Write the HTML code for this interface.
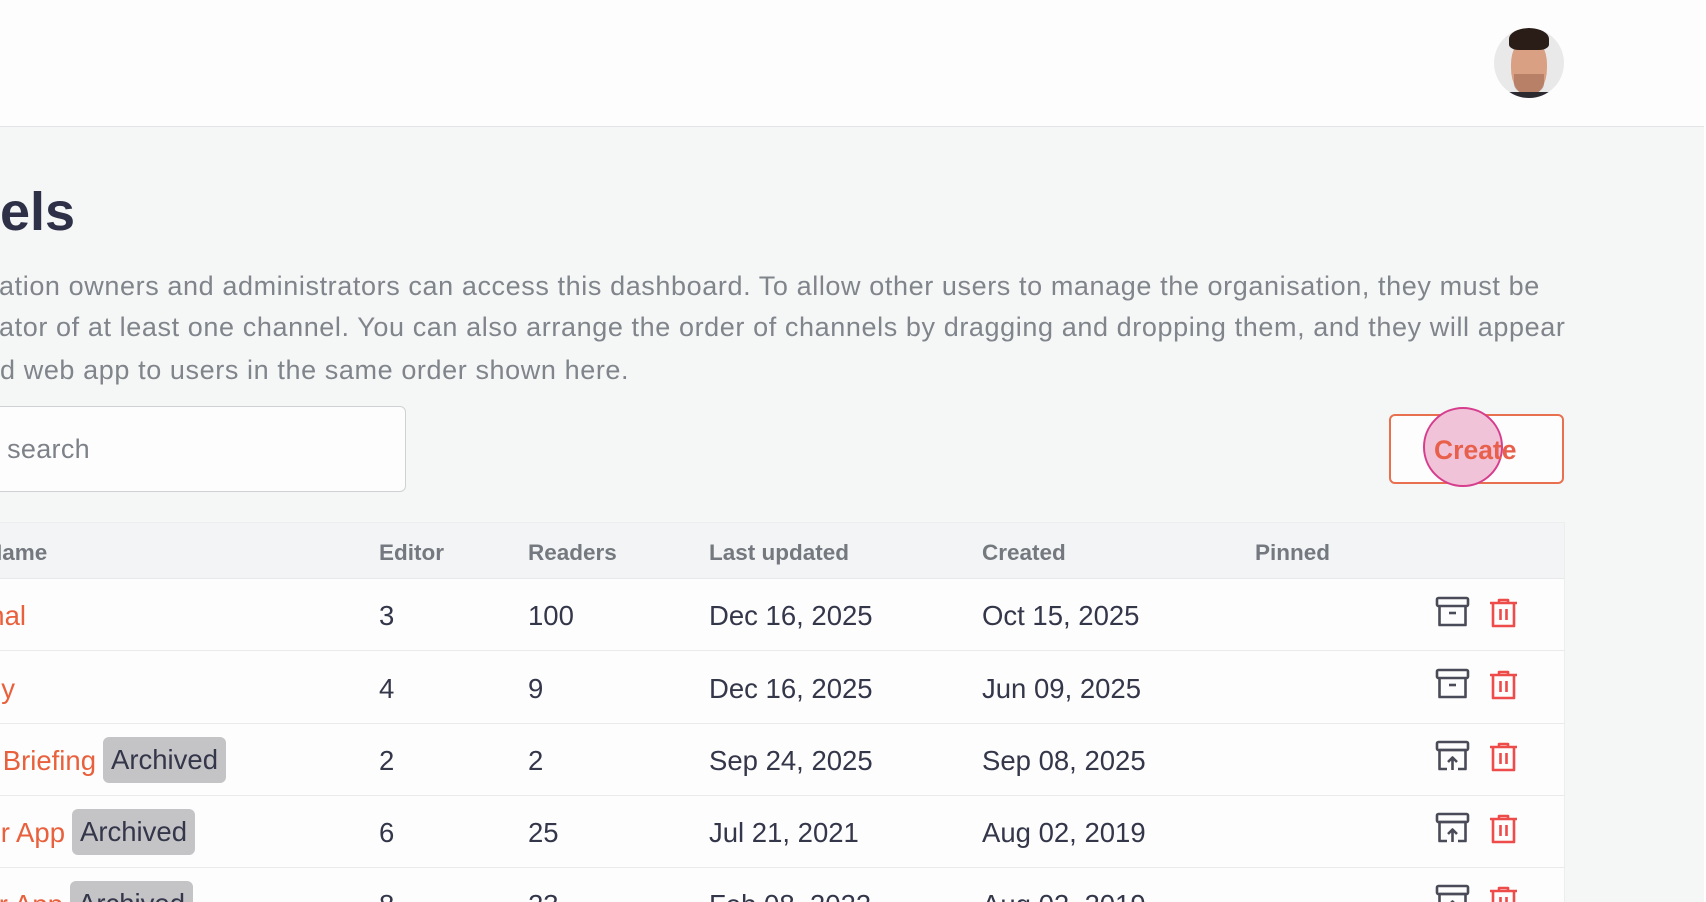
<!DOCTYPE html>
<html><head><meta charset="utf-8"><style>
*{margin:0;padding:0;box-sizing:border-box}
html,body{overflow:hidden}
body{width:1706px;height:902px;background:#f5f6f6;font-family:"Liberation Sans",sans-serif;position:relative}
.wrap{position:absolute;left:0;top:0;width:1706px;height:902px;overflow:hidden}
.hdr{position:absolute;left:0;top:0;width:1704px;height:127px;background:#fdfdfd;border-bottom:1px solid #e2e4e6}
.rline{position:absolute;left:1704px;top:0;width:2px;height:902px;background:#fff}
.ab{position:absolute;white-space:nowrap}
.p{font-size:27px;color:#80848b;letter-spacing:0.6px}
.tbl{position:absolute;left:0;top:522px;width:1565px;height:380px;background:#fdfdfd;border-right:1px solid #ebedef;overflow:hidden}
.th{position:absolute;left:0;top:0;width:1565px;height:57px;background:#f3f4f5;border-bottom:1px solid #e6e8ea;border-top:1px solid #eceef0}
.h{position:absolute;top:17px;font-size:22.5px;color:#74787f;font-weight:bold}
.row{position:absolute;left:0;width:1565px;height:72px;border-bottom:1px solid #e8eaec}
.c{position:absolute;top:21px;font-size:27.5px;color:#34364a;white-space:nowrap}
.n{position:absolute;top:21px;font-size:27.5px;color:#e8603c;white-space:nowrap}
.badge{position:absolute;top:13px;height:46px;line-height:46px;padding:0 8px;background:#c4c4c7;border-radius:6px;font-size:27.5px;color:#34364a}
</style></head><body><div class="wrap">
<div class="hdr"></div>
<div class="rline"></div>
<div class="ab" style="left:1494px;top:28px;width:70px;height:70px;border-radius:50%;background:#e9e9ea;overflow:hidden">
 <div style="position:absolute;left:17px;top:10px;width:36px;height:58px;border-radius:45% 45% 48% 48%;background:#d9a083"></div>
 <div style="position:absolute;left:15px;top:0;width:40px;height:22px;border-radius:50% 50% 25% 25%;background:#2a1d18"></div>
 <div style="position:absolute;left:20px;top:46px;width:30px;height:20px;border-radius:0 0 50% 50%;background:#9a6650;opacity:.55"></div>
 <div style="position:absolute;left:14px;top:64px;width:42px;height:8px;background:#2a2a30"></div>
</div>
<div class="ab" style="left:0;top:181px;font-size:54px;font-weight:bold;color:#2e3047">els</div>
<div class="ab p" style="left:-1px;top:271px">ation owners and administrators can access this dashboard. To allow other users to manage the organisation, they must be</div>
<div class="ab p" style="left:-1px;top:312px">ator of at least one channel. You can also arrange the order of channels by dragging and dropping them, and they will appear</div>
<div class="ab p" style="left:0;top:355px">d web app to users in the same order shown here.</div>
<div class="ab" style="left:-10px;top:406px;width:416px;height:86px;background:#fdfdfd;border:1px solid #cfd1d4;border-radius:6px"></div>
<div class="ab p" style="left:-16px;top:434px;font-size:27px;color:#7d8188;letter-spacing:0.3px">o search</div>
<div class="ab" style="left:1389px;top:414px;width:175px;height:70px;border:2px solid #e8704f;border-radius:6px;background:#fdfdfd"></div>
<div class="ab" style="left:1423px;top:407px;width:80px;height:80px;border-radius:50%;background:#f0c3d8;border:2px solid #d63d8d"></div>
<div class="ab" style="left:1434px;top:435px;font-size:26.5px;font-weight:bold;color:#e8604c">Create</div>
<div class="tbl">
 <div class="th">
  <div class="h" style="left:-14px">Name</div>
  <div class="h" style="left:379px">Editor</div>
  <div class="h" style="left:528px">Readers</div>
  <div class="h" style="left:709px">Last updated</div>
  <div class="h" style="left:982px">Created</div>
  <div class="h" style="left:1255px">Pinned</div>
 </div>
 <div class="row" style="top:57px"><div class="n" style="right:1539px">Internal</div><div class="c" style="left:379px">3</div><div class="c" style="left:528px">100</div><div class="c" style="left:709px">Dec 16, 2025</div><div class="c" style="left:982px">Oct 15, 2025</div></div>
 <div class="row" style="top:130px"><div class="n" style="right:1550px">Weekly</div><div class="c" style="left:379px">4</div><div class="c" style="left:528px">9</div><div class="c" style="left:709px">Dec 16, 2025</div><div class="c" style="left:982px">Jun 09, 2025</div></div>
 <div class="row" style="top:202px"><div class="n" style="right:1469px">Daily Briefing</div><div class="badge" style="left:103px">Archived</div><div class="c" style="left:379px">2</div><div class="c" style="left:528px">2</div><div class="c" style="left:709px">Sep 24, 2025</div><div class="c" style="left:982px">Sep 08, 2025</div></div>
 <div class="row" style="top:274px"><div class="n" style="right:1500px">Other App</div><div class="badge" style="left:72px">Archived</div><div class="c" style="left:379px">6</div><div class="c" style="left:528px">25</div><div class="c" style="left:709px">Jul 21, 2021</div><div class="c" style="left:982px">Aug 02, 2019</div></div>
 <div class="row" style="top:346px"><div class="n" style="right:1502px">Other App</div><div class="badge" style="left:70px">Archived</div><div class="c" style="left:379px">8</div><div class="c" style="left:528px">23</div><div class="c" style="left:709px">Feb 08, 2022</div><div class="c" style="left:982px">Aug 02, 2019</div></div>
</div>
<svg class="ab" style="left:0;top:0" width="1706" height="902">
<defs>
<g id="arc" fill="none" stroke="#4a4b58" stroke-width="2.6" stroke-linejoin="round"><rect x="1" y="1" width="31" height="8" rx="1.5"/><path d="M3.5 9v19h26V9"/><path d="M13 16h7"/></g>
<g id="unarc" fill="none" stroke="#4a4b58" stroke-width="2.6" stroke-linejoin="round"><rect x="1" y="1" width="31" height="8" rx="1.5"/><path d="M11 28H3.5V9h26v19H22"/><path d="M16.5 29V17M12 21l4.5-4.5L21 21"/></g>
<g id="tr" fill="none" stroke="#ee4b4b" stroke-width="2.6" stroke-linejoin="round"><path d="M1 5h27M10 5V2h9v3"/><path d="M4 5v23h21V5"/><path d="M11.5 11v11M17.5 11v11"/></g>
</defs>
<use href="#arc" x="1436" y="597"/><use href="#tr" x="1489" y="598"/>
<use href="#arc" x="1436" y="669"/><use href="#tr" x="1489" y="670"/>
<use href="#unarc" x="1436" y="741"/><use href="#tr" x="1489" y="742"/>
<use href="#unarc" x="1436" y="813"/><use href="#tr" x="1489" y="814"/>
<use href="#unarc" x="1436" y="885"/><use href="#tr" x="1489" y="886"/>
</svg>
</div></body></html>
